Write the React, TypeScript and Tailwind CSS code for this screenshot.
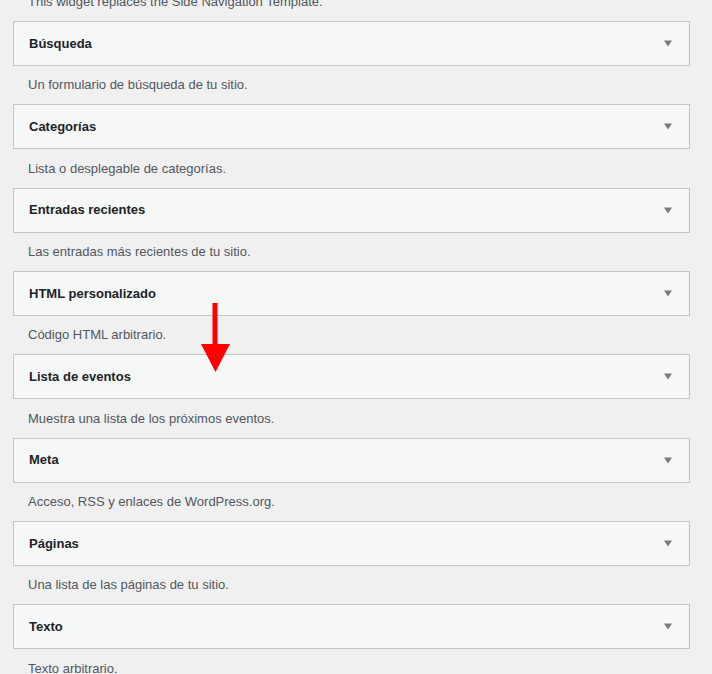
import React from 'react'

const widgets = [
  { title: 'Búsqueda', desc: 'Un formulario de búsqueda de tu sitio.' },
  { title: 'Categorías', desc: 'Lista o desplegable de categorías.' },
  { title: 'Entradas recientes', desc: 'Las entradas más recientes de tu sitio.' },
  { title: 'HTML personalizado', desc: 'Código HTML arbitrario.' },
  { title: 'Lista de eventos', desc: 'Muestra una lista de los próximos eventos.' },
  { title: 'Meta', desc: 'Acceso, RSS y enlaces de WordPress.org.' },
  { title: 'Páginas', desc: 'Una lista de las páginas de tu sitio.' },
  { title: 'Texto', desc: 'Texto arbitrario.' },
]

function Caret() {
  return (
    <svg width="10" height="7" viewBox="0 0 10 7" className="shrink-0">
      <path d="M1 0.5h8L5 6.5z" fill="#787c82" />
    </svg>
  )
}

function Widget({ title, desc }: { title: string; desc: string }) {
  return (
    <div>
      <div className="h-[45px] flex items-center justify-between border border-[#c3c4c7] bg-[#f6f7f7] pl-[15px] pr-[16px]">
        <h3 className="text-[13px] font-semibold text-[#1d2327]">{title}</h3>
        <Caret />
      </div>
      <p className="h-[38.33px] flex items-center pl-[15px] text-[13px] text-[#50575e]">{desc}</p>
    </div>
  )
}

export default function App() {
  return (
    <div
      className="relative h-[674px] w-[712px] overflow-hidden bg-[#f0f0f1]"
      style={{ fontFamily: '"Liberation Sans", Arial, sans-serif' }}
    >
      <div className="ml-[13px] mr-[22px] -mt-[17.33px]">
        <p className="h-[38.33px] flex items-center pl-[15px] text-[13px] text-[#50575e]">
          This widget replaces the Side Navigation Template.
        </p>
        {widgets.map(w => (
          <Widget key={w.title} title={w.title} desc={w.desc} />
        ))}
      </div>

      {/* red annotation arrow */}
      <svg className="absolute left-[200px] top-[303px]" width="31" height="70" viewBox="0 0 31 70">
        <rect x="12.5" y="0" width="5" height="42" fill="#ff0000" />
        <path d="M1 41h29L15.5 69z" fill="#ff0000" />
      </svg>
    </div>
  )
}
